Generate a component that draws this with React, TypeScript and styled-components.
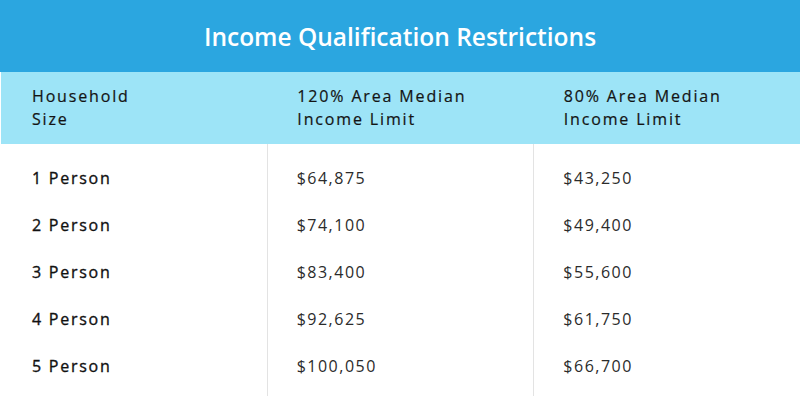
import React from "react";
import styled, { createGlobalStyle } from "styled-components";

const GlobalStyle = createGlobalStyle`
  html, body { margin: 0; padding: 0; background: #ffffff; }
  body { font-family: "Open Sans", "Lato", sans-serif; }
`;

const Page = styled.div`
  width: 800px;
  height: 400px;
  background: #ffffff;
  display: flex;
  flex-direction: column;
`;

const TitleBar = styled.header`
  height: 72px;
  background: #2ba6e0;
  display: flex;
  align-items: center;
  justify-content: center;
`;

const Title = styled.h1`
  margin: 0;
  color: #ffffff;
  font-family: "Open Sans", sans-serif;
  font-weight: 600;
  font-size: 24.5px;
  letter-spacing: 0px;
`;

const HeadRow = styled.div`
  height: 72px;
  margin-left: 1px;
  background: #9de4f7;
  display: grid;
  grid-template-columns: 1fr 1fr 1fr;
  align-items: center;
`;

const HeadCell = styled.div<{ $first?: boolean }>`
  padding-left: ${(p) => (p.$first ? "31px" : "30px")};
  font-size: 16px;
  line-height: 23px;
  letter-spacing: 1.85px;
  color: #141414;
  -webkit-text-stroke: 0.2px #141414;
`;

const Body = styled.div`
  display: grid;
  grid-template-columns: 1fr 1fr 1fr;
  height: 252px;
`;

const Column = styled.div<{ $divided?: boolean }>`
  display: flex;
  flex-direction: column;
  padding: 10px 0 7px ${(p) => (p.$divided ? "29px" : "32px")};
  border-left: ${(p) => (p.$divided ? "1.5px solid #e3e3e3" : "none")};
`;

const Cell = styled.div<{ $label?: boolean }>`
  height: 47px;
  display: flex;
  align-items: center;
  font-size: 16px;
  font-weight: 400;
  letter-spacing: ${(p) => (p.$label ? "1.75px" : "1.5px")};
  color: ${(p) => (p.$label ? "#111111" : "#2b2b2b")};
  -webkit-text-stroke: ${(p) => (p.$label ? "0.35px #111111" : "0")};
`;

const rows = [
  ["1 Person", "$64,875", "$43,250"],
  ["2 Person", "$74,100", "$49,400"],
  ["3 Person", "$83,400", "$55,600"],
  ["4 Person", "$92,625", "$61,750"],
  ["5 Person", "$100,050", "$66,700"],
];

export default function App() {
  return (
    <Page>
      <GlobalStyle />
      <TitleBar>
        <Title>Income Qualification Restrictions</Title>
      </TitleBar>
      <HeadRow>
        <HeadCell $first>
          Household
          <br />
          Size
        </HeadCell>
        <HeadCell>
          120% Area Median
          <br />
          Income Limit
        </HeadCell>
        <HeadCell>
          80% Area Median
          <br />
          Income Limit
        </HeadCell>
      </HeadRow>
      <Body>
        {[0, 1, 2].map((c) => (
          <Column key={c} $divided={c > 0}>
            {rows.map((r) => (
              <Cell key={r[0]} $label={c === 0}>
                {r[c]}
              </Cell>
            ))}
          </Column>
        ))}
      </Body>
    </Page>
  );
}
